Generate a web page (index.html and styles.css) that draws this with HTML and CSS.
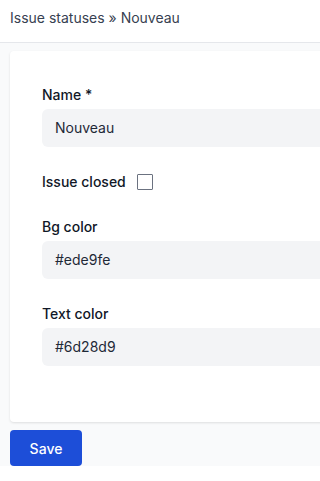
FILE: index.html
```html
<!DOCTYPE html>
<html>
<head>
<meta charset="utf-8">
<link rel="stylesheet" href="styles.css">
</head>
<body>
<header class="topbar">
  <div class="crumbs">Issue statuses » Nouveau</div>
</header>
<main class="main">
  <form class="form">
    <div class="card">
      <div class="field">
        <label class="label">Name *</label>
        <div class="input">Nouveau</div>
      </div>
      <div class="field row">
        <label class="label inline">Issue closed</label>
        <span class="checkbox"></span>
      </div>
      <div class="field">
        <label class="label">Bg color</label>
        <div class="input">#ede9fe</div>
      </div>
      <div class="field">
        <label class="label">Text color</label>
        <div class="input">#6d28d9</div>
      </div>
    </div>
    <div class="actions">
      <button type="button" class="btn">Save</button>
    </div>
  </form>
</main>
</body>
</html>
```
FILE: styles.css
```css
html, body {
  margin: 0;
  padding: 0;
  background: #ffffff;
  overflow: hidden;
  font-family: Inter, "Noto Sans", sans-serif;
  color: #111827;
}
.topbar {
  height: 43px;
  box-sizing: border-box;
  padding: 8px 10px 0;
  background: #ffffff;
  border-bottom: 1px solid #e5e7eb;
  box-shadow: 0 1px 2px rgba(0,0,0,0.04);
}
.crumbs {
  font-size: 14px;
  line-height: 20px;
  color: #374151;
  white-space: nowrap;
}
.main {
  background: #f9fafb;
  padding: 8px 0 0 10px;
  overflow: hidden;
}
.form {
  width: 420px;
}
.card {
  background: #ffffff;
  border-radius: 4px;
  box-shadow: 0 1px 3px rgba(0,0,0,0.08), 0 1px 2px rgba(0,0,0,0.04);
  padding: 34px 32px 31px;
}
.field {
  margin-bottom: 25px;
}
.field.row {
  display: flex;
  align-items: center;
  gap: 11px;
}
.label {
  display: block;
  font-size: 14px;
  line-height: 20px;
  font-weight: 500;
  color: #111827;
  margin-bottom: 4px;
}
.label.inline {
  margin-bottom: 0;
}
.input {
  height: 38px;
  box-sizing: border-box;
  padding: 9px 13px;
  background: #f3f4f6;
  border-radius: 6px;
  font-size: 14px;
  line-height: 20px;
  color: #1f2937;
}
.checkbox {
  width: 16px;
  height: 16px;
  box-sizing: border-box;
  border: 1.5px solid #6b7280;
  border-radius: 1px;
  background: #fff;
}
.actions {
  padding-top: 8px;
}
.btn {
  display: block;
  width: 72px;
  height: 36px;
  border: 0;
  border-radius: 4px;
  background: #1d4ed8;
  color: #ffffff;
  font-family: Inter, "Noto Sans", sans-serif;
  font-size: 14px;
  font-weight: 500;
  padding: 0;
}
```
